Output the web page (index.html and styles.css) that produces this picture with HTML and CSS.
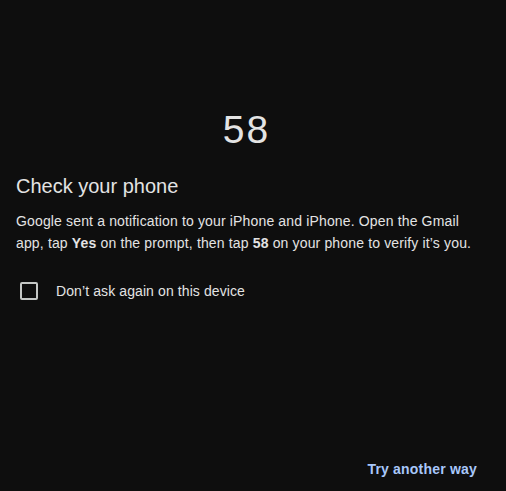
FILE: index.html
```html
<!DOCTYPE html>
<html>
<head>
<meta charset="utf-8">
<link rel="stylesheet" href="styles.css">
</head>
<body>
<main class="page">
  <div class="code">58</div>
  <h1 class="title">Check your phone</h1>
  <p class="desc">Google sent a notification to your iPhone and iPhone. Open the Gmail app, tap <b>Yes</b> on the prompt, then tap <b>58</b> on your phone to verify it’s you.</p>
  <label class="check">
    <span class="box"></span>
    <span class="label">Don’t ask again on this device</span>
  </label>
  <div class="actions">
    <button class="link">Try another way</button>
  </div>
</main>
</body>
</html>
```
FILE: styles.css
```css
html, body {
  margin: 0;
  height: 100%;
  background: #0e0e0e;
}
body {
  font-family: "Liberation Sans", Arial, sans-serif;
  color: #e3e3e3;
}
.page {
  box-sizing: border-box;
  height: 491px;
  width: 477px;
  padding: 104px 0 0 16px;
  display: flex;
  flex-direction: column;
}
.code {
  text-align: center;
  font-size: 39px;
  line-height: 52px;
  color: #e3e3e3;
  letter-spacing: 2px;
}
.title {
  margin: 16px 0 0;
  font-size: 20px;
  font-weight: 400;
  line-height: 28px;
}
.desc {
  margin: 10px 0 0;
  font-size: 14px;
  line-height: 22px;
  letter-spacing: 0.15px;
  color: #e3e3e3;
}
.desc b {
  font-weight: 700;
}
.check {
  margin-top: 28px;
  display: flex;
  align-items: center;
  gap: 18px;
  padding-left: 4px;
  font-size: 14px;
  letter-spacing: 0.1px;
}
.box {
  box-sizing: border-box;
  width: 18px;
  height: 18px;
  border: 2px solid #c4c7c5;
  border-radius: 2px;
}
.actions {
  margin-top: auto;
  margin-bottom: 10px;
  display: flex;
  justify-content: flex-end;
}
.link {
  background: none;
  border: 0;
  padding: 0;
  font-family: inherit;
  font-size: 14px;
  font-weight: 700;
  letter-spacing: 0.2px;
  color: #a8c7fa;
  line-height: 24px;
}
```
